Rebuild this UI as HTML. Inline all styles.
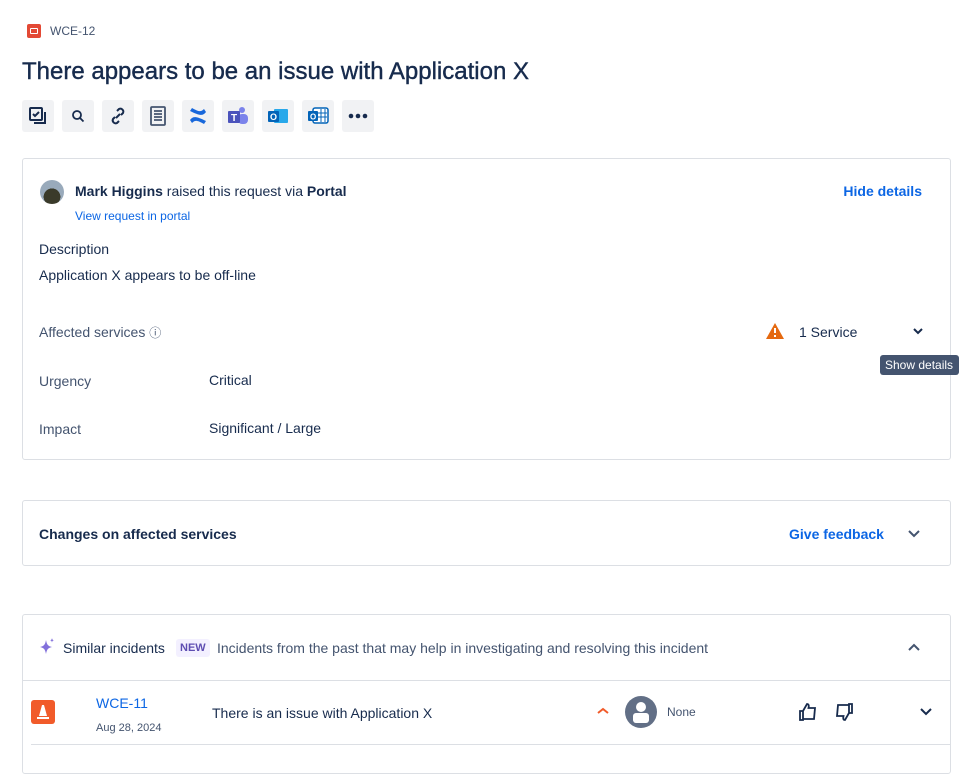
<!DOCTYPE html>
<html><head><meta charset="utf-8"><style>
*{box-sizing:border-box;margin:0;padding:0}
body{width:960px;height:756px;overflow:hidden;background:#fff;font-family:"Liberation Sans",sans-serif;color:#172b4d;font-size:14px;position:relative}
.a{position:absolute;white-space:nowrap}
.btn{position:absolute;top:100px;width:32px;height:32px;background:#f1f2f4;border-radius:3px;display:flex;align-items:center;justify-content:center}
.card{position:absolute;left:22px;width:929px;border:1px solid #dcdfe4;border-radius:3px}
.link{color:#0c66e4}
.lbl{color:#44546f}
</style></head><body>
<div class="a" style="left:27px;top:24px;width:14px;height:14px;background:#e34935;border-radius:2px"><div style="position:absolute;left:3px;top:4px;width:8px;height:6px;border:1.5px solid #fff;border-radius:1px"></div></div>
<div class="a lbl" style="left:50px;top:24px;font-size:12px">WCE-12</div>
<div class="a" style="left:22px;top:58px;font-size:24px;-webkit-text-stroke:0.4px #172b4d">There appears to be an issue with Application X</div>

<div class="btn" style="left:22px"><svg width="18" height="18" viewBox="0 0 18 18" fill="none" stroke="#172b4d" stroke-width="2"><rect x="1" y="1" width="12" height="12" rx="1"/><path d="M4 7l2 2 4-4M16 5v11H5"/></svg></div>
<div class="btn" style="left:62px"><svg width="14" height="14" viewBox="0 0 14 14" fill="none" stroke="#172b4d" stroke-width="1.8"><circle cx="6" cy="6" r="4"/><path d="M9 9l3.5 3.5"/></svg></div>
<div class="btn" style="left:102px"><svg width="20" height="20" viewBox="0 0 20 20" fill="none" stroke="#172b4d" stroke-width="2"><path d="M8 12l4-4M9 5l2-2a3 3 0 014 4l-2 2M11 15l-2 2a3 3 0 01-4-4l2-2"/></svg></div>
<div class="btn" style="left:142px"><svg width="16" height="20" viewBox="0 0 16 20" fill="none" stroke="#44546f" stroke-width="1.8"><rect x="1" y="1" width="14" height="18" rx="1"/><path d="M4 5h8M4 8h8M4 11h8M4 14h8"/></svg></div>
<div class="btn" style="left:182px"><svg width="18" height="18" viewBox="0 0 18 18"><path d="M1 13c3-4 6-4 16 1l-2 3C8 13 6 13 3 16z" fill="#1868db"/><path d="M17 5C14 9 11 9 1 4l2-3c7 4 9 4 12 1z" fill="#1868db"/></svg></div>
<div class="btn" style="left:222px"><svg width="22" height="20" viewBox="0 0 22 20"><circle cx="15" cy="4" r="3" fill="#7b83eb"/><rect x="11" y="8" width="10" height="10" rx="4" fill="#7b83eb"/><rect x="1" y="5" width="12" height="12" rx="1" fill="#4b53bc"/><text x="4" y="15" fill="#fff" font-size="10" font-weight="bold" font-family="Liberation Sans">T</text></svg></div>
<div class="btn" style="left:262px"><svg width="22" height="20" viewBox="0 0 22 20"><rect x="7" y="3" width="14" height="14" rx="1" fill="#28a8ea"/><rect x="1" y="5" width="11" height="11" rx="1" fill="#0364b8"/><text x="3" y="14" fill="#fff" font-size="9" font-weight="bold" font-family="Liberation Sans">O</text></svg></div>
<div class="btn" style="left:302px"><svg width="22" height="20" viewBox="0 0 22 20"><rect x="6" y="2" width="15" height="15" rx="2" fill="#fff" stroke="#0364b8" stroke-width="1.5"/><path d="M10 7h10M10 11h10M14 3v13M18 3v13" stroke="#0364b8"/><rect x="1" y="5" width="10" height="10" rx="1" fill="#0364b8"/><text x="3" y="13.5" fill="#fff" font-size="8" font-weight="bold" font-family="Liberation Sans">O</text></svg></div>
<div class="btn" style="left:342px"><svg width="20" height="6" viewBox="0 0 20 6" fill="#172b4d"><circle cx="3" cy="3" r="2.3"/><circle cx="10" cy="3" r="2.3"/><circle cx="17" cy="3" r="2.3"/></svg></div>

<div class="card" style="top:158px;height:302px">
<div class="a" style="left:17px;top:21px;width:24px;height:24px;border-radius:50%;background:radial-gradient(circle at 50% 70%,#3a3a2a 40%,#9ab 41%)"></div>
<div class="a" style="left:52px;top:24px"><b style="font-weight:600">Mark Higgins</b> raised this request via <b style="font-weight:600">Portal</b></div>
<div class="a link" style="left:52px;top:50px;font-size:12px">View request in portal</div>
<div class="a link" style="right:28px;top:24px;font-weight:600">Hide details</div>
<div class="a" style="left:16px;top:82px">Description</div>
<div class="a" style="left:16px;top:108px">Application X appears to be off-line</div>
<div class="a lbl" style="left:16px;top:165px">Affected services <span style="font-size:12px">ⓘ</span></div>
<svg class="a" style="left:743px;top:164px" width="18" height="16" viewBox="0 0 18 16"><path d="M9 0L18 16H0z" fill="#e56910"/><path d="M9 5v5M9 12v2" stroke="#fff" stroke-width="2"/></svg>
<div class="a" style="left:776px;top:165px">1 Service</div>
<svg class="a" style="left:890px;top:168px" width="10" height="8" viewBox="0 0 10 8" fill="none" stroke="#172b4d" stroke-width="2"><path d="M1 2l4 4 4-4"/></svg>
<div class="a lbl" style="left:16px;top:214px">Urgency</div>
<div class="a" style="left:186px;top:213px">Critical</div>
<div class="a lbl" style="left:16px;top:262px">Impact</div>
<div class="a" style="left:186px;top:261px">Significant / Large</div>
</div>
<div class="a" style="left:880px;top:355px;width:79px;height:20px;background:#44546f;color:#fff;font-size:12px;border-radius:3px;padding:3px 5px">Show details</div>

<div class="card" style="top:500px;height:66px">
<div class="a" style="left:16px;top:25px;font-weight:600">Changes on affected services</div>
<div class="a link" style="left:766px;top:25px;font-weight:600">Give feedback</div>
<svg class="a" style="left:885px;top:29px" width="12" height="8" viewBox="0 0 12 8" fill="none" stroke="#44546f" stroke-width="2"><path d="M1 1l5 5 5-5"/></svg>
</div>

<div class="card" style="top:614px;height:160px">
<svg class="a" style="left:15px;top:23px" width="18" height="18" viewBox="0 0 18 18" fill="#8270db"><path d="M8 2c1 5 2 6 6 7-4 1-5 2-6 7-1-5-2-6-6-7 4-1 5-2 6-7z"/><path d="M14 0c.3 1.5.6 2 2 2.3-1.4.3-1.7.8-2 2.3-.3-1.5-.6-2-2-2.3 1.4-.3 1.7-.8 2-2.3z"/></svg>
<div class="a" style="left:40px;top:25px">Similar incidents</div>
<div class="a" style="left:153px;top:24px;background:#f3f0ff;color:#5e4db2;font-size:11px;font-weight:bold;padding:3px 4px;border-radius:3px">NEW</div>
<div class="a lbl" style="left:194px;top:25px">Incidents from the past that may help in investigating and resolving this incident</div>
<svg class="a" style="left:885px;top:28px" width="12" height="8" viewBox="0 0 12 8" fill="none" stroke="#44546f" stroke-width="2"><path d="M1 7l5-5 5 5"/></svg>
<div class="a" style="left:0;top:65px;width:927px;border-top:1px solid #dcdfe4"></div>
<div class="a" style="left:8px;top:85px;width:24px;height:24px;background:#f15b2a;border-radius:3px"><svg width="24" height="24" viewBox="0 0 24 24" fill="#fff"><path d="M11 5h2l3 11h-8z"/><rect x="6" y="17" width="12" height="2"/></svg></div>
<div class="a link" style="left:73px;top:80px">WCE-11</div>
<div class="a lbl" style="left:73px;top:107px;font-size:11px">Aug 28, 2024</div>
<div class="a" style="left:189px;top:90px">There is an issue with Application X</div>
<svg class="a" style="left:574px;top:92px" width="12" height="8" viewBox="0 0 12 8" fill="none" stroke="#f15b2a" stroke-width="2"><path d="M1 6l5-4 5 4"/></svg>
<div class="a" style="left:602px;top:81px;width:32px;height:32px;border-radius:50%;background:#626f86;overflow:hidden"><div style="position:absolute;left:11px;top:6px;width:10px;height:10px;border-radius:50%;background:#fff"></div><div style="position:absolute;left:8px;top:17px;width:16px;height:10px;border-radius:3px;background:#fff"></div></div>
<div class="a lbl" style="left:644px;top:90px;font-size:12px">None</div>
<svg class="a" style="left:776px;top:88px;background:#fff" width="18" height="18" viewBox="0 0 18 18" fill="none" stroke="#172b4d" stroke-width="1.8"><path d="M1 8h3v9H1zM4 8l4-7c2 0 2 2 1.5 4H16l-1 11H4"/></svg>
<svg class="a" style="left:812px;top:88px" width="18" height="18" viewBox="0 0 18 18" fill="none" stroke="#172b4d" stroke-width="1.8"><path d="M17 10h-3V1h3zM14 10l-4 7c-2 0-2-2-1.5-4H2L3 2h11"/></svg>
<svg class="a" style="left:897px;top:93px" width="12" height="8" viewBox="0 0 12 8" fill="none" stroke="#172b4d" stroke-width="2"><path d="M1 1l5 5 5-5"/></svg>
<div class="a" style="left:8px;top:129px;width:919px;border-top:1px solid #dcdfe4"></div>
</div>
</body></html>
